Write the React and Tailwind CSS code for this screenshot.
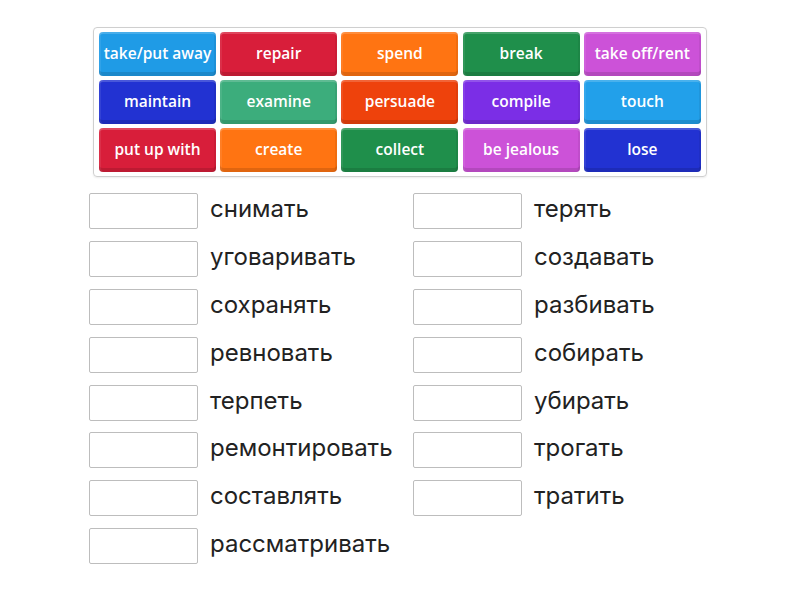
import React from 'react';

const tiles = [
  { text: 'take/put away', bg: 'bg-[#1f9be6]' },
  { text: 'repair', bg: 'bg-[#d81e3a]' },
  { text: 'spend', bg: 'bg-[#ff7412]' },
  { text: 'break', bg: 'bg-[#1f8f4b]' },
  { text: 'take off/rent', bg: 'bg-[#cc52d8]' },
  { text: 'maintain', bg: 'bg-[#2232d2]' },
  { text: 'examine', bg: 'bg-[#3cad7c]' },
  { text: 'persuade', bg: 'bg-[#ee420c]' },
  { text: 'compile', bg: 'bg-[#7b2ee6]' },
  { text: 'touch', bg: 'bg-[#22a0ea]' },
  { text: 'put up with', bg: 'bg-[#d81e3a]' },
  { text: 'create', bg: 'bg-[#ff7412]' },
  { text: 'collect', bg: 'bg-[#1f8f4b]' },
  { text: 'be jealous', bg: 'bg-[#cc52d8]' },
  { text: 'lose', bg: 'bg-[#2232d2]' },
];

const leftWords = ['снимать', 'уговаривать', 'сохранять', 'ревновать', 'терпеть', 'ремонтировать', 'составлять', 'рассматривать'];
const rightWords = ['терять', 'создавать', 'разбивать', 'собирать', 'убирать', 'трогать', 'тратить'];

const Tile = ({ text, bg }) => (
  <div
    className={`${bg} w-[117px] h-[44px] rounded-[4px] flex items-center justify-center text-white text-[15.5px] font-semibold shadow-[inset_0_-4px_0_rgba(0,0,0,0.12),inset_0_2px_0_rgba(255,255,255,0.18),inset_2px_0_0_rgba(255,255,255,0.08),inset_-2px_0_0_rgba(0,0,0,0.06)]`}
    style={{ fontFamily: '"Open Sans", sans-serif' }}
  >
    {text}
  </div>
);

const Row = ({ word }) => (
  <div className="flex items-center h-[47.9px]">
    <div className="w-[109px] h-[36px] border border-[#bdbdbd] rounded-[2px] bg-white" />
    <span className="ml-[12px] mb-[4px] text-[24px] text-[#222] leading-none" style={{ fontFamily: 'Inter, sans-serif' }}>
      {word}
    </span>
  </div>
);

const App = () => {
  return (
    <div className="w-[800px] h-[600px] bg-white">
      <div className="pt-[27px] pl-[93px]">
        <div className="w-[614px] h-[150px] border border-[#cfcfcf] rounded-[4px] px-[5px] py-[4px] grid grid-cols-5 gap-x-[4px] gap-y-[3.5px] shadow-[0_1px_2px_rgba(0,0,0,0.08)]">
          {tiles.map((t, i) => (
            <Tile key={i} {...t} />
          ))}
        </div>
      </div>

      {/* Answer rows */}
      <div className="flex pt-[10px] pl-[89px]">
        <div className="w-[324px]">
          {leftWords.map((w) => (
            <Row key={w} word={w} />
          ))}
        </div>
        <div>
          {rightWords.map((w) => (
            <Row key={w} word={w} />
          ))}
        </div>
      </div>
    </div>
  );
};

export default App;
